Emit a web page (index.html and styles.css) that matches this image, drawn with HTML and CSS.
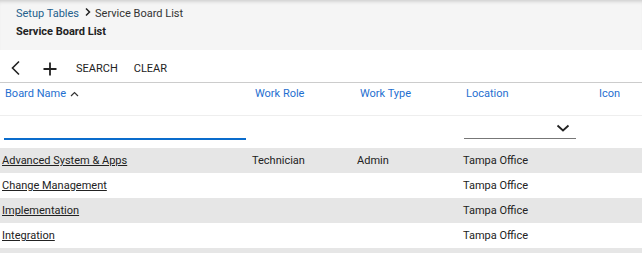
FILE: index.html
```html
<!DOCTYPE html>
<html lang="en">
<head>
    <meta charset="UTF-8">
    <title>Service Board List</title>
    <link rel="stylesheet" href="styles.css">
</head>
<body>
    <div class="page-header">
        <div class="breadcrumb">
            <a class="crumb-link" href="#">Setup Tables</a>
            <svg class="crumb-sep" width="8" height="10" viewBox="0 0 8 10"><path d="M2 1.5 L5.5 5 L2 8.5" fill="none" stroke="#222" stroke-width="1.5"/></svg>
            <span>Service Board List</span>
        </div>
        <div class="page-title">Service Board List</div>
    </div>

    <div class="toolbar">
        <button class="icon-btn back-btn" title="Back">
            <svg width="12" height="16" viewBox="0 0 12 16"><path d="M9 1.5 L2.5 8 L9 14.5" fill="none" stroke="#222" stroke-width="1.6"/></svg>
        </button>
        <button class="icon-btn add-btn" title="Add">
            <svg width="14" height="14" viewBox="0 0 14 14"><path d="M7 0.5 V13.5 M0.5 7 H13.5" fill="none" stroke="#222" stroke-width="1.8"/></svg>
        </button>
        <button class="text-btn">Search</button>
        <button class="text-btn">Clear</button>
    </div>

    <div class="grid">
        <div class="grid-row head-row">
            <div class="cell head">Board Name
                <svg class="sort" width="9" height="6" viewBox="0 0 9 6"><path d="M1 5 L4.5 1.5 L8 5" fill="none" stroke="#333" stroke-width="1.2"/></svg>
            </div>
            <div class="cell head">Work Role</div>
            <div class="cell head">Work Type</div>
            <div class="cell head">Location</div>
            <div class="cell head">Icon</div>
        </div>

        <div class="grid-row filter-row">
            <div class="cell"><input class="filter-input" type="text"></div>
            <div class="cell"></div>
            <div class="cell"></div>
            <div class="cell">
                <div class="filter-select">
                    <svg width="14" height="8" viewBox="0 0 14 8"><path d="M1.5 1.5 L7 6.5 L12.5 1.5" fill="none" stroke="#222" stroke-width="1.8"/></svg>
                </div>
            </div>
            <div class="cell"></div>
        </div>

        <div class="grid-row data-row">
            <div class="cell"><a href="#">Advanced System &amp; Apps</a></div>
            <div class="cell">Technician</div>
            <div class="cell">Admin</div>
            <div class="cell">Tampa Office</div>
            <div class="cell"></div>
        </div>
        <div class="grid-row data-row">
            <div class="cell"><a href="#">Change Management</a></div>
            <div class="cell"></div>
            <div class="cell"></div>
            <div class="cell">Tampa Office</div>
            <div class="cell"></div>
        </div>
        <div class="grid-row data-row">
            <div class="cell"><a href="#">Implementation</a></div>
            <div class="cell"></div>
            <div class="cell"></div>
            <div class="cell">Tampa Office</div>
            <div class="cell"></div>
        </div>
        <div class="grid-row data-row">
            <div class="cell"><a href="#">Integration</a></div>
            <div class="cell"></div>
            <div class="cell"></div>
            <div class="cell">Tampa Office</div>
            <div class="cell"></div>
        </div>
        <div class="grid-row data-row"></div>
    </div>
</body>
</html>
```

FILE: styles.css
```css
body {
    font-family: Roboto, "Liberation Sans", Arial, sans-serif;
    font-size: 11px;
    color: #222;
    margin: 0;
    padding: 0;
    background-color: white;
    overflow: hidden;
}
.page-header {
    height: 50px;
    box-sizing: border-box;
    padding: 5px 16px 0;
    background-color: #f5f5f5;
    box-shadow: inset 0 4px 4px -3px rgba(0, 0, 0, 0.2);
    line-height: 18px;
}
.breadcrumb {
    display: flex;
    align-items: center;
    color: #333;
}
.crumb-link {
    color: #245f8c;
    text-decoration: none;
}
.crumb-sep {
    margin: 0 3px 0 5px;
    position: relative;
    top: -2px;
}
.page-title {
    font-weight: bold;
    color: #222;
}
.toolbar {
    height: 32px;
    display: flex;
    align-items: center;
    border-bottom: 1px solid #ccc;
    padding-left: 10px;
}
.icon-btn, .text-btn {
    background: none;
    border: none;
    padding: 0;
    cursor: pointer;
    font-family: inherit;
    display: flex;
    align-items: center;
}
.back-btn {
    margin-top: 4px;
    width: 14px;
}
.add-btn {
    margin-left: 19px;
    margin-top: 5px;
}
.text-btn {
    font-size: 11px;
    text-transform: uppercase;
    color: #222;
    margin-left: 19px;
    margin-top: 5px;
}
.text-btn + .text-btn {
    margin-left: 16px;
}
.grid-row {
    display: grid;
    grid-template-columns: 250px 105px 106px 133px 1fr;
}
.cell {
    padding-left: 2px;
    white-space: nowrap;
}
.head-row {
    height: 32px;
    border-bottom: 1px solid #eee;
}
.head {
    color: #1f6fd0;
    padding-left: 5px;
    padding-top: 4px;
    display: flex;
    align-items: flex-start;
}
.sort {
    margin: 4px 0 0 4px;
}
.filter-row {
    height: 32px;
}
.filter-row .cell {
    padding: 0;
}
.filter-input {
    display: block;
    box-sizing: border-box;
    width: 242px;
    height: 23px;
    margin: 1px 0 0 4px;
    border: none;
    border-bottom: 2px solid #0a6ccc;
    background: none;
    outline: none;
}
.filter-select {
    width: 112px;
    height: 23px;
    margin: 0 0 0 3px;
    box-sizing: border-box;
    border-bottom: 1px solid #777;
    display: flex;
    align-items: center;
    justify-content: flex-end;
    padding-right: 6px;
    padding-top: 2px;
}
.data-row {
    height: 25px;
    line-height: 25px;
    color: #222;
}
.data-row:nth-child(odd) {
    background-color: #e6e6e6;
}
.data-row a {
    color: #222;
}
```
